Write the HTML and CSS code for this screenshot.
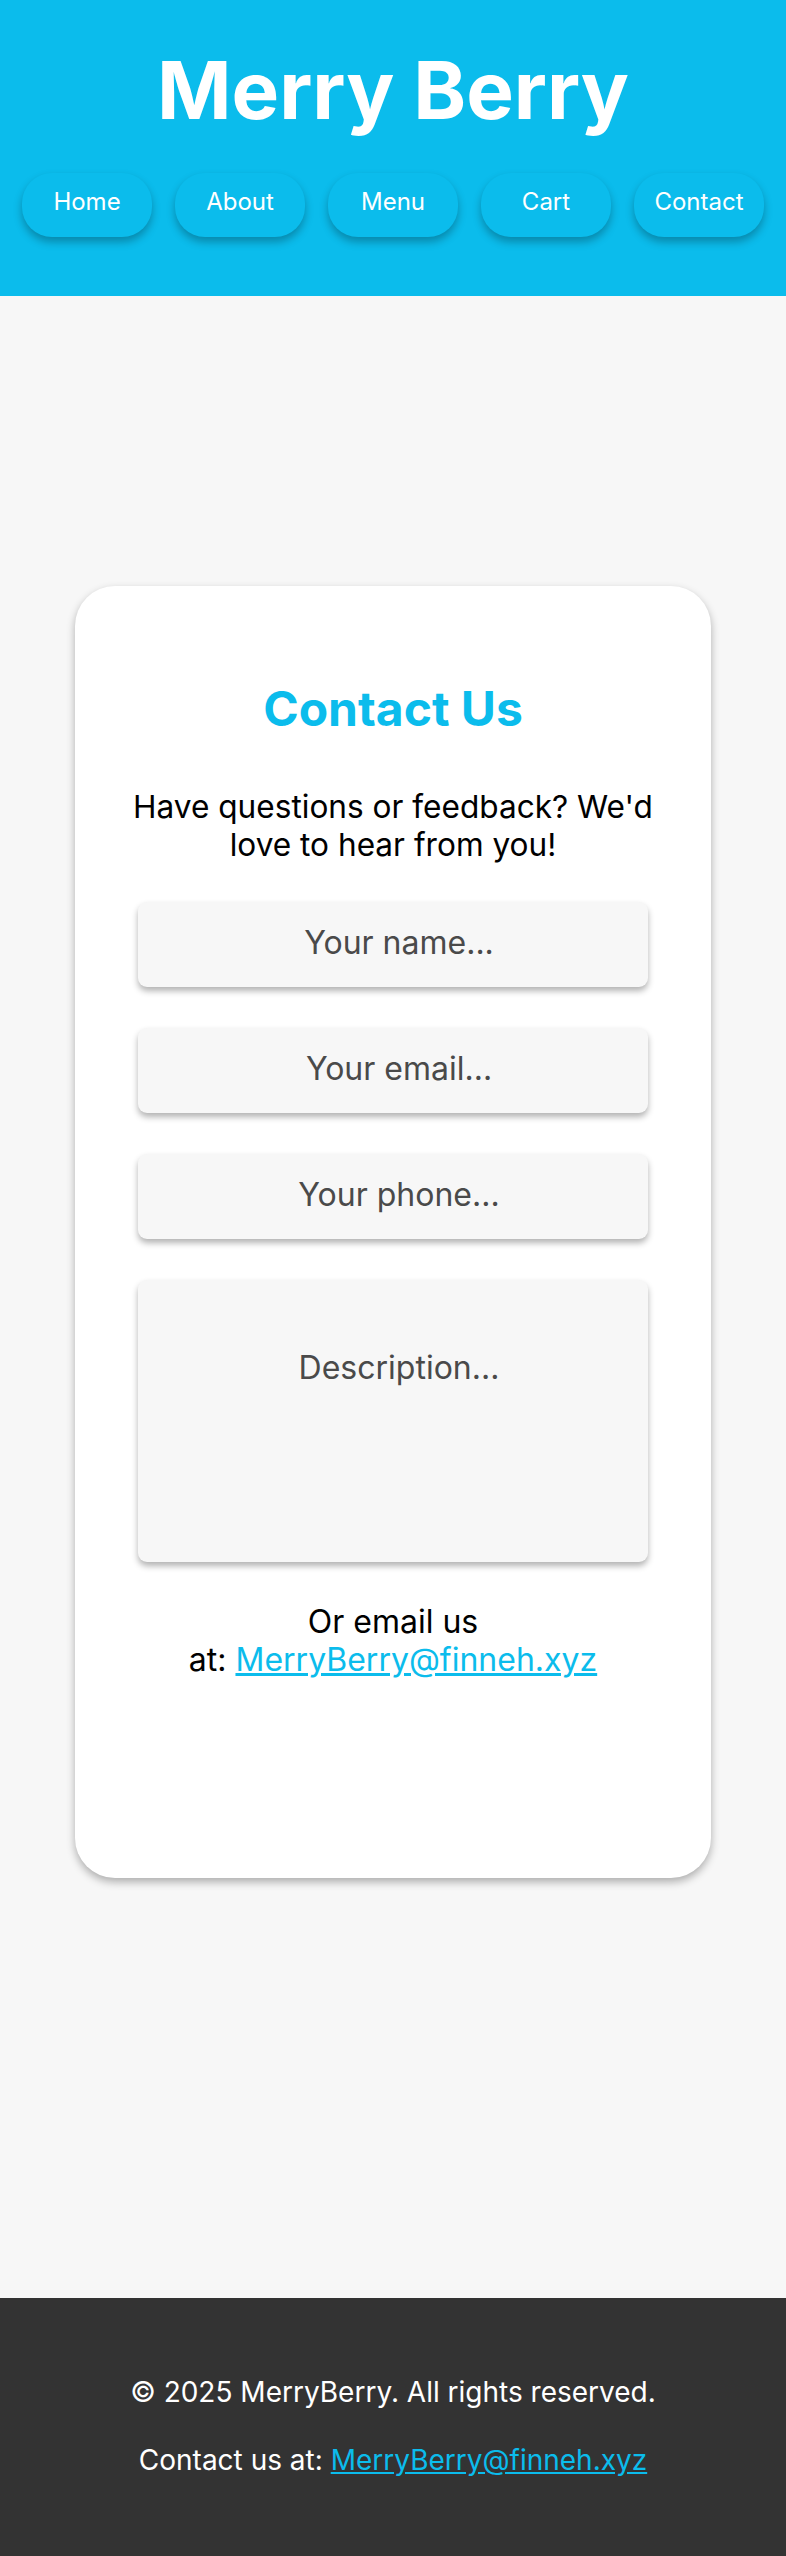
FILE: index.html
```html
<!DOCTYPE html>
<html lang="en">
<head>
<meta charset="utf-8">
<title>Merry Berry - Contact</title>
<link rel="stylesheet" href="styles.css">
</head>
<body>
<header class="site-header">
  <h1 class="brand">Merry Berry</h1>
  <nav class="nav">
    <a class="nav-btn" href="#">Home</a>
    <a class="nav-btn" href="#">About</a>
    <a class="nav-btn" href="#">Menu</a>
    <a class="nav-btn" href="#">Cart</a>
    <a class="nav-btn" href="#">Contact</a>
  </nav>
</header>
<main class="main">
  <section class="card">
    <h2 class="card-title">Contact Us</h2>
    <p class="lead">Have questions or feedback? We'd love to hear from you!</p>
    <form class="form">
      <input class="field" type="text" placeholder="Your name...">
      <input class="field" type="email" placeholder="Your email...">
      <input class="field" type="tel" placeholder="Your phone...">
      <textarea class="field area" placeholder="Description..."></textarea>
    </form>
    <p class="alt">Or email us <span class="nowrap">at: <a class="link" href="#">MerryBerry@finneh.xyz</a></span></p>
  </section>
</main>
<footer class="site-footer">
  <p class="foot-line">© 2025 MerryBerry. All rights reserved.</p>
  <p class="foot-line">Contact us at: <a class="link" href="#">MerryBerry@finneh.xyz</a></p>
</footer>
</body>
</html>
```
FILE: styles.css
```css
* { box-sizing: border-box; }
html, body { margin: 0; padding: 0; }
body {
  font-family: Inter, "Liberation Sans", sans-serif;
  background: #f7f7f7;
  color: #000;
}
.site-header {
  background: #0bbcec;
  height: 296px;
  padding-top: 41px;
  text-align: center;
}
.brand {
  margin: 0;
  font-size: 80px;
  font-weight: 700;
  color: #fff;
  line-height: 97px;
}
.nav {
  display: flex;
  justify-content: center;
  gap: 23px;
  margin-top: 35px;
}
.nav-btn {
  width: 130px;
  height: 64px;
  display: flex;
  align-items: center;
  justify-content: center;
  padding-bottom: 7px;
  border-radius: 30px;
  background: #0bbcec;
  color: #fff;
  text-decoration: none;
  font-size: 24px;
  font-weight: 400;
  box-shadow: 0 5px 8px rgba(0, 0, 0, 0.28);
}
.main {
  padding: 290px 0 420px;
  display: flex;
  justify-content: center;
}
.card {
  width: 636px;
  height: 1292px;
  background: #fff;
  border-radius: 40px;
  box-shadow: 0 4px 8px rgba(0, 0, 0, 0.3);
  padding: 94px 40px 0;
  text-align: center;
  display: flex;
  flex-direction: column;
  align-items: center;
}
.card-title {
  margin: 0;
  font-size: 48px;
  line-height: 58px;
  font-weight: 700;
  color: #0bbcec;
}
.lead {
  margin: 50px 0 0;
  font-size: 31.6px;
  line-height: 38px;
  width: 545px;
}
.form {
  margin-top: 38px;
  display: flex;
  flex-direction: column;
  gap: 41px;
  width: 510px;
}
.field {
  width: 100%;
  height: 85px;
  border: none;
  border-radius: 9px;
  background: #f7f7f7;
  box-shadow: 0 4px 6px rgba(0, 0, 0, 0.3);
  font-family: Inter, "Liberation Sans", sans-serif;
  font-size: 32px;
  text-align: center;
  color: #333;
  padding: 0 14px 4px 26px;
  outline: none;
}
.field::placeholder { color: #4a4a4a; }
.area {
  height: 282px;
  padding-top: 68px;
  resize: none;
  display: block;
}
.alt {
  margin: 41px 0 0;
  font-size: 32px;
  line-height: 38px;
  width: 545px;
}
.nowrap { white-space: nowrap; }
.link {
  color: #0bbcec;
  text-decoration: underline;
}
.site-footer {
  background: #333;
  color: #fff;
  text-align: center;
  height: 258px;
  padding-top: 77px;
}
.foot-line {
  margin: 0 0 34px;
  font-size: 28px;
  line-height: 34px;
}
```
